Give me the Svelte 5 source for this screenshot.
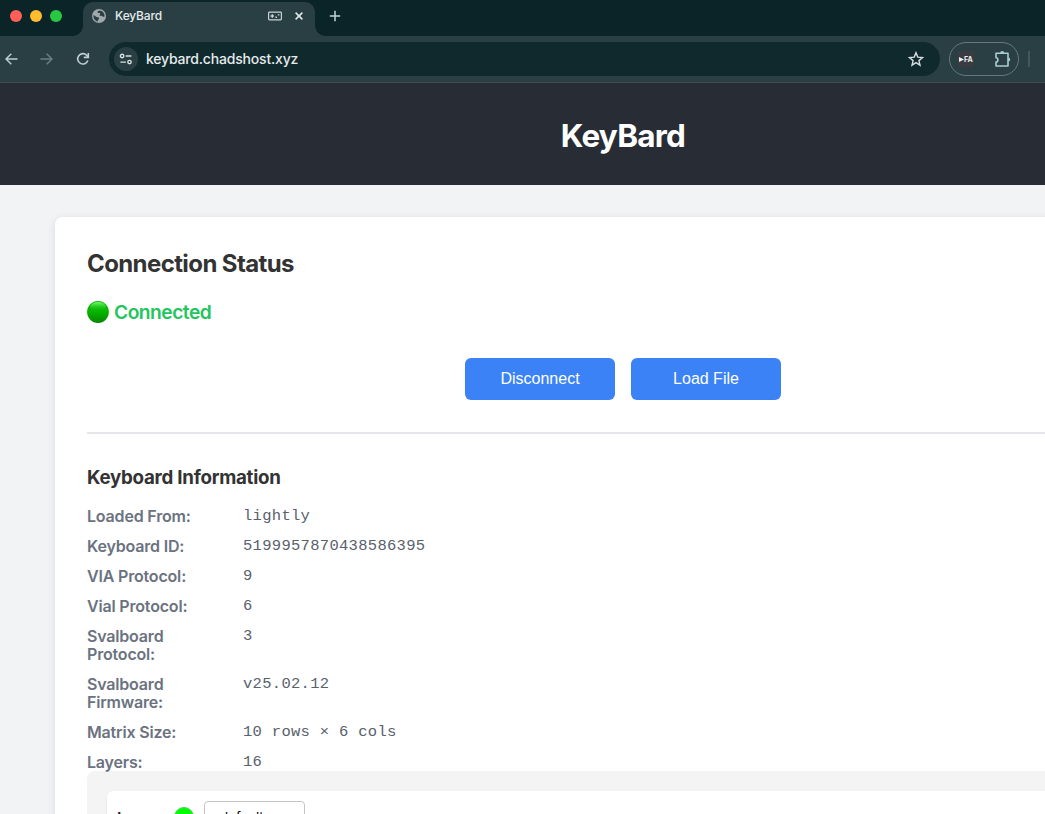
<script>
  const info = [
    ['Loaded From:', 'lightly'],
    ['Keyboard ID:', '5199957870438586395'],
    ['VIA Protocol:', '9'],
    ['Vial Protocol:', '6'],
    ['Svalboard Protocol:', '3'],
    ['Svalboard Firmware:', 'v25.02.12'],
    ['Matrix Size:', '10 rows × 6 cols'],
    ['Layers:', '16']
  ];
</script>

<div class="window">
  <div class="tabstrip">
    <div class="lights"><i class="red"></i><i class="yellow"></i><i class="green"></i></div>
    <div class="tab">
      <svg class="globe" width="14" height="14" viewBox="0 0 14 14">
        <circle cx="7" cy="7" r="7" fill="#a1a9ad" />
        <path d="M1.5 6 L4.6 8.1 C5.5 8.7 6.6 8.1 7.1 9 C7.3 10.1 6 9.9 5.8 12.4 C3 12 1.1 9.4 1.5 6Z M7 1.4 C6.1 2.4 5.2 2.6 5.6 3.6 C6.2 4.7 7.6 3.5 8.2 4.4 C8.5 5.2 7.3 5.5 7.6 6.2 C8.2 7.4 9.8 6.4 10.4 7.3 C11 8.2 11.9 7.8 12.6 7.5 C12.8 4.2 10.6 1.5 7 1.4Z" fill="#293f43" />
      </svg>
      <span class="tabtitle">KeyBard</span>
      <svg class="hid" width="14" height="10" viewBox="0 0 14 10" fill="none" stroke="#c8d3d4">
        <rect x=".6" y="1.1" width="12.8" height="7.8" rx=".8" stroke-width="1.2" />
        <path d="M2.6 5h3.4M4.3 3.3v3.4M7.4 6.2h1.6M9.8 3.9h1.6" stroke-width="1.4" />
      </svg>
      <svg class="close" width="8" height="8" viewBox="0 0 8 8"><path d="M.6 .6L7.4 7.4M7.4 .6L.6 7.4" stroke="#e3eaea" stroke-width="1.5" /></svg>
    </div>
    <svg class="plus" width="12" height="12" viewBox="0 0 12 12"><path d="M6 .8v10.4M.8 6h10.4" stroke="#c4d2d3" stroke-width="1.5" /></svg>
  </div>

  <div class="toolbar">
    <svg class="back" width="13" height="12" viewBox="0 0 13 12" fill="none" stroke="#b9d0d2" stroke-width="1.5"><path d="M12.5 6H1.2M6.3 .7L1 6l5.3 5.3" /></svg>
    <svg class="forward" width="13" height="12" viewBox="0 0 13 12" fill="none" stroke="#6a7f82" stroke-width="1.5"><path d="M.5 6h11.3M6.7 .7L12 6l-5.3 5.3" /></svg>
    <svg class="reload" width="14" height="14" viewBox="0 0 14 14" fill="none" stroke="#c0d2d4" stroke-width="1.6"><path d="M11.8 8.5A5.2 5.2 0 1 1 10.7 3.3L12 4.7" /><path d="M12.3 .9v4.5H7.8" /></svg>
    <div class="omnibox">
      <div class="tune">
        <svg width="14" height="12" viewBox="0 0 14 12" fill="none" stroke="#d8e1e2" stroke-width="1.4"><circle cx="3.1" cy="3" r="1.7" /><path d="M6.7 3h5.7M1.4 9.1h5.5" /><circle cx="10.5" cy="9.1" r="1.7" /></svg>
      </div>
      <span class="url">keybard.chadshost.xyz</span>
      <svg class="star" width="16" height="16" viewBox="0 0 16 16" fill="none" stroke="#d5dfe0" stroke-width="1.4"><path d="M8 1.7l1.8 4.4 4.7.4-3.6 3.1 1.1 4.6L8 11.7l-4 2.5 1.1-4.6-3.6-3.1 4.7-.4z" /></svg>
    </div>
    <div class="extensions">
      <span class="fa"><svg width="5" height="5" viewBox="0 0 5 5"><path d="M0 0l5 2.5L0 5z" fill="#eee" /></svg>FA</span>
      <svg width="18" height="18" viewBox="0 0 18 18" fill="none" stroke="#a9cdd1" stroke-width="1.6"><path d="M2 3.2H14V16H2V12C4.5 11.8 4.5 8 2 7.8Z" stroke-linejoin="round" /><path d="M6.2 3a2 2 0 0 1 4 0zM14.2 7.6a2 2 0 0 1 0 4z" fill="#a9cdd1" stroke="none" /></svg>
    </div>
    <i class="divider"></i>
  </div>

  <div class="viewport">
    <div class="page">
      <header><h1>KeyBard</h1></header>
      <main>
        <section class="card">
          <h2>Connection Status</h2>
          <div class="status">
            <svg width="22" height="22" viewBox="0 0 22 22">
              <defs>
                <linearGradient id="ball" x1="0" y1="0" x2="0" y2="1"><stop offset="0" stop-color="#19ad13" /><stop offset=".45" stop-color="#06b800" /><stop offset="1" stop-color="#078600" /></linearGradient>
                <linearGradient id="shine" x1="0" y1="0" x2="0" y2="1"><stop offset="0" stop-color="#70ff69" /><stop offset="1" stop-color="#10c609" stop-opacity="0" /></linearGradient>
              </defs>
              <circle cx="11" cy="11" r="10.9" fill="url(#ball)" />
              <ellipse cx="11" cy="5.7" rx="8" ry="4.7" fill="url(#shine)" />
            </svg>
            <span>Connected</span>
          </div>
          <div class="actions"><button>Disconnect</button><button>Load File</button></div>
          <hr />
          <h3>Keyboard Information</h3>
          <dl>
            {#each info as [label, value]}
              <dt>{label}</dt>
              <dd>{value}</dd>
            {/each}
          </dl>
          <div class="layers">
            <div class="layer">
              <strong>Layer</strong>
              <i></i>
              <div class="name">default</div>
            </div>
          </div>
        </section>
      </main>
    </div>
  </div>
</div>

<style>
  :global(body) { margin: 0; overflow: hidden; }
  .window { width: 1045px; height: 814px; overflow: hidden; display: flex; flex-direction: column; font-family: Inter, sans-serif; }
  .window, .window * { box-sizing: border-box; }
  svg { display: block; flex: none; }
  .tabstrip { height: 36px; flex: none; display: flex; background: #0a2428; }
  .lights { width: 83px; display: flex; gap: 8px; padding: 10px 0 0 10px; }
  .lights i { width: 12px; height: 12px; border-radius: 50%; }
  .red { background: #ff5f57; }
  .yellow { background: #febc2e; }
  .green { background: #28c840; }
  .tab { position: relative; width: 232px; height: 34px; margin-top: 2px; padding: 0 12px 6px 9px; display: flex; align-items: center; background: #293f43; border-radius: 10px 10px 0 0; }
  .tab::before, .tab::after { content: ''; position: absolute; bottom: 0; width: 10px; height: 10px; }
  .tab::before { left: -10px; background: radial-gradient(circle at 0 0, transparent 9.5px, #293f43 10px); }
  .tab::after { right: -10px; background: radial-gradient(circle at 100% 0, transparent 9.5px, #293f43 10px); }
  .tabtitle { margin-left: 9px; padding-bottom: 1px; font-size: 12px; color: #e4ebeb; flex: 1; font-weight: 500; letter-spacing: -.15px; }
  .close { margin-left: 13px; }
  .plus { margin: 10px 0 0 14px; }
  .toolbar { height: 47px; flex: none; display: flex; align-items: center; background: #293f43; border-bottom: 1px solid #464c4e; padding-left: 5px; }
  .forward { margin-left: 22px; }
  .reload { margin-left: 23px; }
  .omnibox { width: 831px; height: 34px; margin-left: 19px; border-radius: 17px; background: #10292d; display: flex; align-items: center; padding: 0 16px 0 5px; }
  .tune { width: 24px; height: 24px; border-radius: 50%; background: #293f43; display: grid; place-items: center; }
  .url { margin-left: 8px; padding-bottom: 2px; font-size: 14px; font-weight: 500; letter-spacing: -.19px; color: #e4ebeb; flex: 1; }
  .extensions { width: 70px; height: 34px; margin-left: 9px; border: 1px solid #68787b; border-radius: 17px; display: flex; align-items: center; justify-content: space-between; padding: 0 6px 0 8px; }
  .fa { width: 16px; height: 16px; background: #3b3c42; color: #eee; font-size: 7px; font-weight: 700; display: flex; align-items: center; padding-left: 1px; border-radius: 1px; }
  .divider { width: 2px; height: 16px; margin-left: 9px; background: #41585c; }
  .viewport { flex: 1; overflow: hidden; background: #f2f3f5; }
  .page { width: 1246px; }
  header { height: 102px; background: #282c34; display: flex; justify-content: center; padding-top: 32px; }
  h1 { margin: 0; font-size: 31.5px; line-height: 41px; font-weight: 700; color: #fff; letter-spacing: -.75px; }
  main { padding: 32px 55px; }
  .card { height: 800px; background: #fff; border-radius: 8px; padding: 32px; box-shadow: 0 2px 10px rgba(0, 0, 0, .1); }
  h2 { margin: 0; font-size: 24px; line-height: 30px; font-weight: 650; color: #333; letter-spacing: -.6px; }
  .status { display: flex; align-items: center; gap: 5px; height: 28px; margin-top: 19px; color: #22c55e; font-size: 19.2px; font-weight: 600; letter-spacing: -.5px; }
  .actions { display: flex; justify-content: center; gap: 16px; margin-top: 32px; }
  button { width: 150px; height: 42px; border: 0; border-radius: 6px; background: #3b82f6; color: #fff; font: 16px "Liberation Sans", sans-serif; padding: 0; }
  hr { height: 2px; border: 0; background: #e5e7eb; margin: 32px 0; }
  h3 { margin: 0; font-size: 18.72px; line-height: 24px; font-weight: 650; color: #333; letter-spacing: -.25px; }
  dl { margin: 17px 0 0; display: grid; grid-template-columns: 140px 1fr; column-gap: 16px; row-gap: 12px; }
  dt { font-size: 16px; line-height: 18px; font-weight: 600; color: #6b7280; letter-spacing: -.18px; }
  dd { margin: 0; font: 15.5px/18px "Liberation Mono", monospace; letter-spacing: .3px; color: #59616d; }
  .layers { height: 200px; background: #f4f4f4; border-radius: 8px; padding: 20px; }
  .layer { height: 160px; background: #fff; border-radius: 6px; box-shadow: 0 1px 3px rgba(0, 0, 0, .08); display: flex; align-items: flex-start; padding: 10px; }
  .layer strong { width: 57px; padding-top: 7px; font-size: 16px; line-height: 20px; font-weight: 600; color: #222; }
  .layer i { width: 20px; height: 20px; margin-top: 6px; border-radius: 50%; background: #0f0; border: 1px solid #4fce4f; }
  .name { width: 101px; height: 34px; margin-left: 10px; border: 1px solid #c4c4c4; border-radius: 4px; font-size: 13.3px; line-height: 31px; color: #000; padding-left: 15px; }
</style>
